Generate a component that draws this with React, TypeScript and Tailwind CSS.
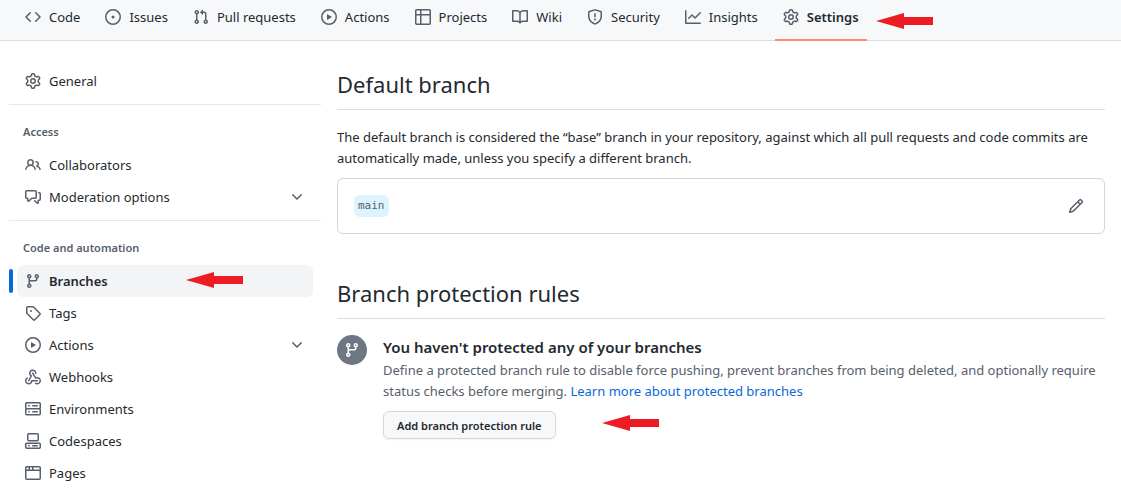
import React from "react";

const ICONS = {
  code: "m11.28 3.22 4.25 4.25a.75.75 0 0 1 0 1.06l-4.25 4.25a.749.749 0 0 1-1.275-.326.749.749 0 0 1 .215-.734L13.94 8l-3.72-3.72a.749.749 0 0 1 .326-1.275.749.749 0 0 1 .734.215Zm-6.56 0a.751.751 0 0 1 1.042.018.751.751 0 0 1 .018 1.042L2.06 8l3.72 3.72a.749.749 0 0 1-.326 1.275.749.749 0 0 1-.734-.215L.47 8.53a.75.75 0 0 1 0-1.06Z",
  issue: "M8 9.5a1.5 1.5 0 1 0 0-3 1.5 1.5 0 0 0 0 3Z M8 0a8 8 0 1 1 0 16A8 8 0 0 1 8 0ZM1.5 8a6.5 6.5 0 1 0 13 0 6.5 6.5 0 0 0-13 0Z",
  pull: "M1.5 3.25a2.25 2.25 0 1 1 3 2.122v5.256a2.251 2.251 0 1 1-1.5 0V5.372A2.25 2.25 0 0 1 1.5 3.25Zm5.677-.177L9.573.677A.25.25 0 0 1 10 .854V2.5h1A2.5 2.5 0 0 1 13.5 5v5.628a2.251 2.251 0 1 1-1.5 0V5a1 1 0 0 0-1-1h-1v1.646a.25.25 0 0 1-.427.177L7.177 3.427a.25.25 0 0 1 0-.354ZM3.75 2.5a.75.75 0 1 0 0 1.5.75.75 0 0 0 0-1.5Zm0 9.5a.75.75 0 1 0 0 1.5.75.75 0 0 0 0-1.5Zm8.25.75a.75.75 0 1 0 1.5 0 .75.75 0 0 0-1.5 0Z",
  play: "M8 0a8 8 0 1 1 0 16A8 8 0 0 1 8 0ZM1.5 8a6.5 6.5 0 1 0 13 0 6.5 6.5 0 0 0-13 0Zm4.879-2.773 4.264 2.559a.25.25 0 0 1 0 .428l-4.264 2.559A.25.25 0 0 1 6 10.559V5.442a.25.25 0 0 1 .379-.215Z",
  table: "M0 1.75C0 .784.784 0 1.75 0h12.5C15.216 0 16 .784 16 1.75v12.5A1.75 1.75 0 0 1 14.25 16H1.75A1.75 1.75 0 0 1 0 14.25ZM6.5 6.5v8h7.75a.25.25 0 0 0 .25-.25V6.5Zm8-1.5V1.75a.25.25 0 0 0-.25-.25H6.5V5Zm-13 1.5v7.75c0 .138.112.25.25.25H5v-8ZM5 5V1.5H1.75a.25.25 0 0 0-.25.25V5Z",
  book: "M0 1.75A.75.75 0 0 1 .75 1h4.253c1.227 0 2.317.59 3 1.501A3.743 3.743 0 0 1 11.006 1h4.245a.75.75 0 0 1 .75.75v10.5a.75.75 0 0 1-.75.75h-4.507a2.25 2.25 0 0 0-1.591.659l-.622.621a.75.75 0 0 1-1.06 0l-.622-.621A2.25 2.25 0 0 0 5.258 13H.75a.75.75 0 0 1-.75-.75Zm7.251 10.324.004-5.073-.002-2.253A2.25 2.25 0 0 0 5.003 2.5H1.5v9h3.757a3.75 3.75 0 0 1 1.994.574ZM8.755 4.75l-.004 7.322a3.752 3.752 0 0 1 1.992-.572H14.5v-9h-3.495a2.25 2.25 0 0 0-2.25 2.25Z",
  shield: "M7.467.133a1.748 1.748 0 0 1 1.066 0l5.25 1.68A1.75 1.75 0 0 1 15 3.48V7c0 1.566-.32 3.182-1.303 4.682-.983 1.498-2.585 2.813-5.032 3.855a1.697 1.697 0 0 1-1.33 0c-2.447-1.042-4.049-2.357-5.032-3.855C1.32 10.182 1 8.566 1 7V3.48a1.75 1.75 0 0 1 1.217-1.667Zm.61 1.429a.25.25 0 0 0-.153 0l-5.25 1.68a.25.25 0 0 0-.174.238V7c0 1.358.275 2.666 1.057 3.86.784 1.194 2.121 2.34 4.366 3.297a.196.196 0 0 0 .154 0c2.245-.956 3.582-2.104 4.366-3.298C13.225 9.666 13.5 8.36 13.5 7V3.48a.251.251 0 0 0-.174-.237l-5.25-1.68ZM8.75 4.75v3a.75.75 0 0 1-1.5 0v-3a.75.75 0 0 1 1.5 0ZM9 10.5a1 1 0 1 1-2 0 1 1 0 0 1 2 0Z",
  graph: "M1.5 1.75V13.5h13.75a.75.75 0 0 1 0 1.5H.75a.75.75 0 0 1-.75-.75V1.75a.75.75 0 0 1 1.5 0Zm14.28 2.53-5.25 5.25a.75.75 0 0 1-1.06 0L7 7.06 4.28 9.78a.751.751 0 0 1-1.042-.018.751.751 0 0 1-.018-1.042l3.25-3.25a.75.75 0 0 1 1.06 0L10 7.94l4.72-4.72a.751.751 0 0 1 1.042.018.751.751 0 0 1 .018 1.042Z",
  gear: "M8 0a8.2 8.2 0 0 1 .701.031C9.444.095 9.99.645 10.16 1.29l.288 1.107c.018.066.079.158.212.224.231.114.454.243.668.386.123.082.233.09.299.071l1.103-.303c.644-.176 1.392.021 1.82.63.27.385.506.792.704 1.218.315.675.111 1.422-.364 1.891l-.814.806c-.049.048-.098.147-.088.294.016.257.016.515 0 .772-.01.147.038.246.088.294l.814.806c.475.469.679 1.216.364 1.891a7.977 7.977 0 0 1-.704 1.217c-.428.61-1.176.807-1.82.63l-1.102-.302c-.067-.019-.177-.011-.3.071a5.909 5.909 0 0 1-.668.386c-.133.066-.194.158-.211.224l-.29 1.106c-.168.646-.715 1.196-1.458 1.26a8.006 8.006 0 0 1-1.402 0c-.743-.064-1.289-.614-1.458-1.26l-.289-1.106c-.018-.066-.079-.158-.212-.224a5.738 5.738 0 0 1-.668-.386c-.123-.082-.233-.09-.299-.071l-1.103.303c-.644.176-1.392-.021-1.82-.63a8.12 8.12 0 0 1-.704-1.218c-.315-.675-.111-1.422.363-1.891l.815-.806c.05-.048.098-.147.088-.294a6.214 6.214 0 0 1 0-.772c.01-.147-.038-.246-.088-.294l-.815-.806C.635 6.045.431 5.298.746 4.623a7.92 7.92 0 0 1 .704-1.217c.428-.61 1.176-.807 1.82-.63l1.102.302c.067.019.177.011.3-.071.214-.143.437-.272.668-.386.133-.066.194-.158.211-.224l.29-1.106C6.009.645 6.556.095 7.299.03 7.53.01 7.764 0 8 0Zm-.571 1.525c-.036.003-.108.036-.137.146l-.289 1.105c-.147.561-.549.967-.998 1.189-.173.086-.34.183-.5.29-.417.278-.97.423-1.529.27l-1.103-.303c-.109-.03-.175.016-.195.045-.22.312-.412.644-.573.99-.014.031-.021.11.059.19l.815.806c.411.406.562.957.53 1.456a4.709 4.709 0 0 0 0 .582c.032.499-.119 1.05-.53 1.456l-.815.806c-.081.08-.073.159-.059.19.162.346.353.677.573.989.02.03.085.076.195.046l1.102-.303c.56-.153 1.113-.008 1.53.27.161.107.328.204.501.29.447.222.85.629.997 1.189l.289 1.105c.029.109.101.143.137.146a6.6 6.6 0 0 0 1.142 0c.036-.003.108-.036.137-.146l.289-1.105c.147-.561.549-.967.998-1.189.173-.086.34-.183.5-.29.417-.278.97-.423 1.529-.27l1.103.303c.109.029.175-.016.195-.045.22-.313.411-.644.573-.99.014-.031.021-.11-.059-.19l-.815-.806c-.411-.406-.562-.957-.53-1.456a4.709 4.709 0 0 0 0-.582c-.032-.499.119-1.05.53-1.456l.815-.806c.081-.08.073-.159.059-.19a6.464 6.464 0 0 0-.573-.989c-.02-.03-.085-.076-.195-.046l-1.102.303c-.56.153-1.113.008-1.53-.27a4.44 4.44 0 0 0-.501-.29c-.447-.222-.85-.629-.997-1.189l-.289-1.105c-.029-.11-.101-.143-.137-.146a6.6 6.6 0 0 0-1.142 0ZM11 8a3 3 0 1 1-6 0 3 3 0 0 1 6 0ZM9.5 8a1.5 1.5 0 1 0-3.001.001A1.5 1.5 0 0 0 9.5 8Z",
  people: "M2 5.5a3.5 3.5 0 1 1 5.898 2.549 5.508 5.508 0 0 1 3.034 4.084.75.75 0 1 1-1.482.235 4 4 0 0 0-7.9 0 .75.75 0 0 1-1.482-.236A5.507 5.507 0 0 1 3.102 8.05 3.493 3.493 0 0 1 2 5.5ZM11 4a3.001 3.001 0 0 1 2.22 5.018 5.01 5.01 0 0 1 2.56 3.012.749.749 0 0 1-.885.954.752.752 0 0 1-.549-.514 3.507 3.507 0 0 0-2.522-2.372.75.75 0 0 1-.574-.73v-.352a.75.75 0 0 1 .416-.672A1.5 1.5 0 0 0 11 5.5.75.75 0 0 1 11 4Zm-5.5-.5a2 2 0 1 0-.001 3.999A2 2 0 0 0 5.5 3.5Z",
  comments: "M1.75 1h8.5c.966 0 1.75.784 1.75 1.75v5.5A1.75 1.75 0 0 1 10.25 10H7.061l-2.574 2.573A1.458 1.458 0 0 1 2 11.543V10h-.25A1.75 1.75 0 0 1 0 8.25v-5.5C0 1.784.784 1 1.75 1ZM1.5 2.75v5.5c0 .138.112.25.25.25h1a.75.75 0 0 1 .75.75v2.19l2.72-2.72a.749.749 0 0 1 .53-.22h3.5a.25.25 0 0 0 .25-.25v-5.5a.25.25 0 0 0-.25-.25h-8.5a.25.25 0 0 0-.25.25Zm13 2a.25.25 0 0 0-.25-.25h-.5a.75.75 0 0 1 0-1.5h.5c.966 0 1.75.784 1.75 1.75v5.5A1.75 1.75 0 0 1 14.25 12H14v1.543a1.458 1.458 0 0 1-2.487 1.03L9.22 12.28a.749.749 0 0 1 .326-1.275.749.749 0 0 1 .734.215l2.22 2.22v-2.19a.75.75 0 0 1 .75-.75h1a.25.25 0 0 0 .25-.25Z",
  chevron: "M12.78 5.22a.749.749 0 0 1 0 1.06l-4.25 4.25a.749.749 0 0 1-1.06 0L3.22 6.28a.749.749 0 1 1 1.06-1.06L8 8.939l3.72-3.719a.749.749 0 0 1 1.06 0Z",
  branch: "M9.5 3.25a2.25 2.25 0 1 1 3 2.122V6A2.5 2.5 0 0 1 10 8.5H6a1 1 0 0 0-1 1v1.128a2.251 2.251 0 1 1-1.5 0V5.372a2.25 2.25 0 1 1 1.5 0v1.836A2.493 2.493 0 0 1 6 7h4a1 1 0 0 0 1-1v-.628A2.25 2.25 0 0 1 9.5 3.25Zm-6 0a.75.75 0 1 0 1.5 0 .75.75 0 0 0-1.5 0Zm8.25-.75a.75.75 0 1 0 0 1.5.75.75 0 0 0 0-1.5ZM4.25 12a.75.75 0 1 0 0 1.5.75.75 0 0 0 0-1.5Z",
  tag: "M1 7.775V2.75C1 1.784 1.784 1 2.75 1h5.025c.464 0 .91.184 1.238.513l6.25 6.25a1.75 1.75 0 0 1 0 2.474l-5.026 5.026a1.75 1.75 0 0 1-2.474 0l-6.25-6.25A1.752 1.752 0 0 1 1 7.775Zm1.5 0c0 .066.026.13.073.177l6.25 6.25a.25.25 0 0 0 .354 0l5.025-5.025a.25.25 0 0 0 0-.354l-6.25-6.25a.25.25 0 0 0-.177-.073H2.75a.25.25 0 0 0-.25.25ZM6 5a1 1 0 1 1 0 2 1 1 0 0 1 0-2Z",
  webhook: "M5.5 4.25a2.25 2.25 0 0 1 4.5 0 .75.75 0 0 0 1.5 0 3.75 3.75 0 1 0-6.14 2.889l-2.272 4.258a.75.75 0 0 0 1.324.706L7 7.25a.75.75 0 0 0-.309-1.015A2.25 2.25 0 0 1 5.5 4.25Z M7.364 3.607a.75.75 0 0 1 1.03.257l2.608 4.349a3.75 3.75 0 1 1-.628 6.785.75.75 0 0 1 .752-1.299 2.25 2.25 0 1 0-.033-3.88.75.75 0 0 1-1.03-.256L7.107 4.636a.75.75 0 0 1 .257-1.03Z M2.9 8.776A.75.75 0 0 1 2.625 9.8 2.25 2.25 0 1 0 6 11.75a.75.75 0 0 1 .75-.751h5.5a.75.75 0 0 1 0 1.5H7.425a3.751 3.751 0 1 1-5.55-3.998.75.75 0 0 1 1.024.274Z",
  server: "M1.75 1h12.5c.966 0 1.75.784 1.75 1.75v4c0 .372-.116.717-.314 1 .198.283.314.628.314 1v4a1.75 1.75 0 0 1-1.75 1.75H1.75A1.75 1.75 0 0 1 0 12.75v-4c0-.358.109-.707.314-1a1.739 1.739 0 0 1-.314-1v-4C0 1.784.784 1 1.75 1ZM1.5 2.75v4c0 .138.112.25.25.25h12.5a.25.25 0 0 0 .25-.25v-4a.25.25 0 0 0-.25-.25H1.75a.25.25 0 0 0-.25.25Zm.25 5.75a.25.25 0 0 0-.25.25v4c0 .138.112.25.25.25h12.5a.25.25 0 0 0 .25-.25v-4a.25.25 0 0 0-.25-.25ZM7 4.75A.75.75 0 0 1 7.75 4h4.5a.75.75 0 0 1 0 1.5h-4.5A.75.75 0 0 1 7 4.75ZM7.75 10h4.5a.75.75 0 0 1 0 1.5h-4.5a.75.75 0 0 1 0-1.5ZM3 4.75A.75.75 0 0 1 3.75 4h.5a.75.75 0 0 1 0 1.5h-.5A.75.75 0 0 1 3 4.75ZM3.75 10h.5a.75.75 0 0 1 0 1.5h-.5a.75.75 0 0 1 0-1.5Z",
  codespaces: "M0 11.25c0-.966.784-1.75 1.75-1.75h12.5c.966 0 1.75.784 1.75 1.75v3A1.75 1.75 0 0 1 14.25 16H1.75A1.75 1.75 0 0 1 0 14.25Zm2-9.5C2 .784 2.784 0 3.75 0h8.5C13.216 0 14 .784 14 1.75v5a1.75 1.75 0 0 1-1.75 1.75h-8.5A1.75 1.75 0 0 1 2 6.75Zm1.75-.25a.25.25 0 0 0-.25.25v5c0 .138.112.25.25.25h8.5a.25.25 0 0 0 .25-.25v-5a.25.25 0 0 0-.25-.25Zm-2 9.5a.25.25 0 0 0-.25.25v3c0 .138.112.25.25.25h12.5a.25.25 0 0 0 .25-.25v-3a.25.25 0 0 0-.25-.25Z M7 12.75a.75.75 0 0 1 .75-.75h4.5a.75.75 0 0 1 0 1.5h-4.5a.75.75 0 0 1-.75-.75Zm-4 0a.75.75 0 0 1 .75-.75h.5a.75.75 0 0 1 0 1.5h-.5a.75.75 0 0 1-.75-.75Z",
  browser: "M0 2.75C0 1.784.784 1 1.75 1h12.5c.966 0 1.75.784 1.75 1.75v10.5A1.75 1.75 0 0 1 14.25 15H1.75A1.75 1.75 0 0 1 0 13.25ZM14.5 6h-13v7.25c0 .138.112.25.25.25h12.5a.25.25 0 0 0 .25-.25Zm-6-3.5v2h6V2.75a.25.25 0 0 0-.25-.25ZM5 2.5v2h2v-2Zm-3.25 0a.25.25 0 0 0-.25.25V4.5h2v-2Z",
  pencil: "M11.013 1.427a1.75 1.75 0 0 1 2.474 0l1.086 1.086a1.75 1.75 0 0 1 0 2.474l-8.61 8.61c-.21.21-.47.364-.756.445l-3.251.93a.75.75 0 0 1-.927-.928l.929-3.25c.081-.286.235-.547.445-.758l8.61-8.61Zm.176 4.823L9.75 4.81l-6.286 6.287a.253.253 0 0 0-.064.108l-.558 1.953 1.953-.558a.253.253 0 0 0 .108-.064Zm1.238-3.763a.25.25 0 0 0-.354 0L10.811 3.75l1.439 1.44 1.263-1.263a.25.25 0 0 0 0-.354Z",
};

type IconName = keyof typeof ICONS;

function Icon({ name, className = "size-4 text-[#57606a]" }: { name: IconName; className?: string }) {
  return (
    <svg viewBox="0 0 16 16" fill="currentColor" aria-hidden="true" className={`shrink-0 ${className}`}>
      <path d={ICONS[name]} />
    </svg>
  );
}

function Arrow({ className = "" }: { className?: string }) {
  return (
    <svg viewBox="0 0 57 16" fill="#ed1c24" aria-hidden="true" className={`h-4 w-[57px] shrink-0 ${className}`}>
      <path d="M0 8 28 0v4h29v8H28v4Z" />
    </svg>
  );
}

const TABS: { icon: IconName; label: string; active?: boolean }[] = [
  { icon: "code", label: "Code" },
  { icon: "issue", label: "Issues" },
  { icon: "pull", label: "Pull requests" },
  { icon: "play", label: "Actions" },
  { icon: "table", label: "Projects" },
  { icon: "book", label: "Wiki" },
  { icon: "shield", label: "Security" },
  { icon: "graph", label: "Insights" },
  { icon: "gear", label: "Settings", active: true },
];

type Item = { icon: IconName; label: string; active?: boolean; expandable?: boolean };

const ACCESS: Item[] = [
  { icon: "people", label: "Collaborators" },
  { icon: "comments", label: "Moderation options", expandable: true },
];

const AUTOMATION: Item[] = [
  { icon: "branch", label: "Branches", active: true },
  { icon: "tag", label: "Tags" },
  { icon: "play", label: "Actions", expandable: true },
  { icon: "webhook", label: "Webhooks" },
  { icon: "server", label: "Environments" },
  { icon: "codespaces", label: "Codespaces" },
  { icon: "browser", label: "Pages" },
];

function SideItem({ icon, label, active, expandable }: Item) {
  const row = "flex h-8 w-full items-center gap-2 rounded-md px-2 text-left";
  if (expandable) {
    return (
      <li className="px-2">
        <button type="button" aria-expanded="false" className={row}>
          <Icon name={icon} />
          <span className="grow">{label}</span>
          <Icon name="chevron" />
        </button>
      </li>
    );
  }
  if (active) {
    return (
      <li className="flex items-center pr-2">
        <span className="mr-1 h-6 w-1 shrink-0 rounded-md bg-[#0969da]" />
        <a href="#branches" aria-current="page" className={`${row} bg-[#f3f4f6] font-semibold`}>
          <Icon name={icon} />
          <span className="w-[129px]">{label}</span>
          <Arrow className="mb-0.5" />
        </a>
      </li>
    );
  }
  return (
    <li className="px-2">
      <a href={`#${label.toLowerCase()}`} className={row}>
        <Icon name={icon} />
        <span>{label}</span>
      </a>
    </li>
  );
}

function SideGroup({ title, items }: { title: string; items: Item[] }) {
  return (
    <section className="mt-[7px] border-t border-[#e6e8eb] pt-2">
      <h3 className="flex h-9 items-center px-3.5 text-[11px] font-semibold text-[#57606a]">{title}</h3>
      <ul>
        {items.map((item) => (
          <SideItem key={item.label} {...item} />
        ))}
      </ul>
    </section>
  );
}

export default function App() {
  return (
    <div className="bg-white font-['Noto_Sans','Open_Sans',sans-serif] text-[13px] leading-[21px] text-[#24292f]">
      <header className="border-b border-[#d8dee4] bg-[#f6f8fa]">
        <nav aria-label="Repository" className="-mb-px flex gap-[9px] pl-[17px]">
          {TABS.map(({ icon, label, active }) => (
            <a
              key={label}
              href={`#${label.toLowerCase().replace(" ", "-")}`}
              aria-current={active ? "page" : undefined}
              className={`flex h-[41px] items-center gap-2 border-b-2 px-2 pb-[5px] whitespace-nowrap ${
                active ? "border-[#fd8c73] font-semibold" : "border-transparent"
              }`}
            >
              <Icon name={icon} />
              {label}
            </a>
          ))}
          <Arrow className="mt-[13px]" />
        </nav>
      </header>

      <div className="flex gap-4 pt-6 pr-4 pl-[9px]">
        <nav aria-label="Settings" className="w-[312px] shrink-0">
          <ul>
            <SideItem icon="gear" label="General" />
          </ul>
          <SideGroup title="Access" items={ACCESS} />
          <SideGroup title="Code and automation" items={AUTOMATION} />
        </nav>

        <main className="min-w-0 grow">
          <h2 className="border-b border-[#d8dee4] pb-1.5 text-[22px] leading-[38px]">Default branch</h2>
          <p className="mt-[17px]">
            The default branch is considered the “base” branch in your repository, against which all pull requests and
            code commits are automatically made, unless you specify a different branch.
          </p>
          <div className="mt-[9px] flex h-14 items-center justify-between rounded-md border border-[#d0d7de] pr-5 pl-4">
            <code className="rounded-md bg-[#ddf4ff] px-1 font-['DejaVu_Sans_Mono',monospace] text-[11px] leading-[22px] text-[#57606a]">
              main
            </code>
            <button type="button" aria-label="Rename branch">
              <Icon name="pencil" />
            </button>
          </div>

          <h2 className="mt-10 border-b border-[#d8dee4] pb-1.5 text-[22px] leading-[38px]">
            Branch protection rules
          </h2>
          <div className="mt-4 flex gap-4">
            <span className="flex size-[30px] shrink-0 items-center justify-center rounded-full bg-[#6e7781]">
              <Icon name="branch" className="size-4 text-white" />
            </span>
            <div className="min-w-0">
              <h3 className="text-[15px] leading-[25px] font-semibold">You haven't protected any of your branches</h3>
              <p className="text-[#57606a]">
                Define a protected branch rule to disable force pushing, prevent branches from being deleted, and
                optionally require status checks before merging.{" "}
                <a href="#protected-branches" className="text-[#0969da]">
                  Learn more about protected branches
                </a>
              </p>
              <div className="mt-[9px] flex items-center gap-[46px]">
                <button
                  type="button"
                  className="h-7 rounded-md border border-[#d5d8da] bg-[#f6f8fa] px-[13px] text-[11px] font-semibold shadow-xs"
                >
                  Add branch protection rule
                </button>
                <Arrow className="mb-1" />
              </div>
            </div>
          </div>
        </main>
      </div>
    </div>
  );
}
